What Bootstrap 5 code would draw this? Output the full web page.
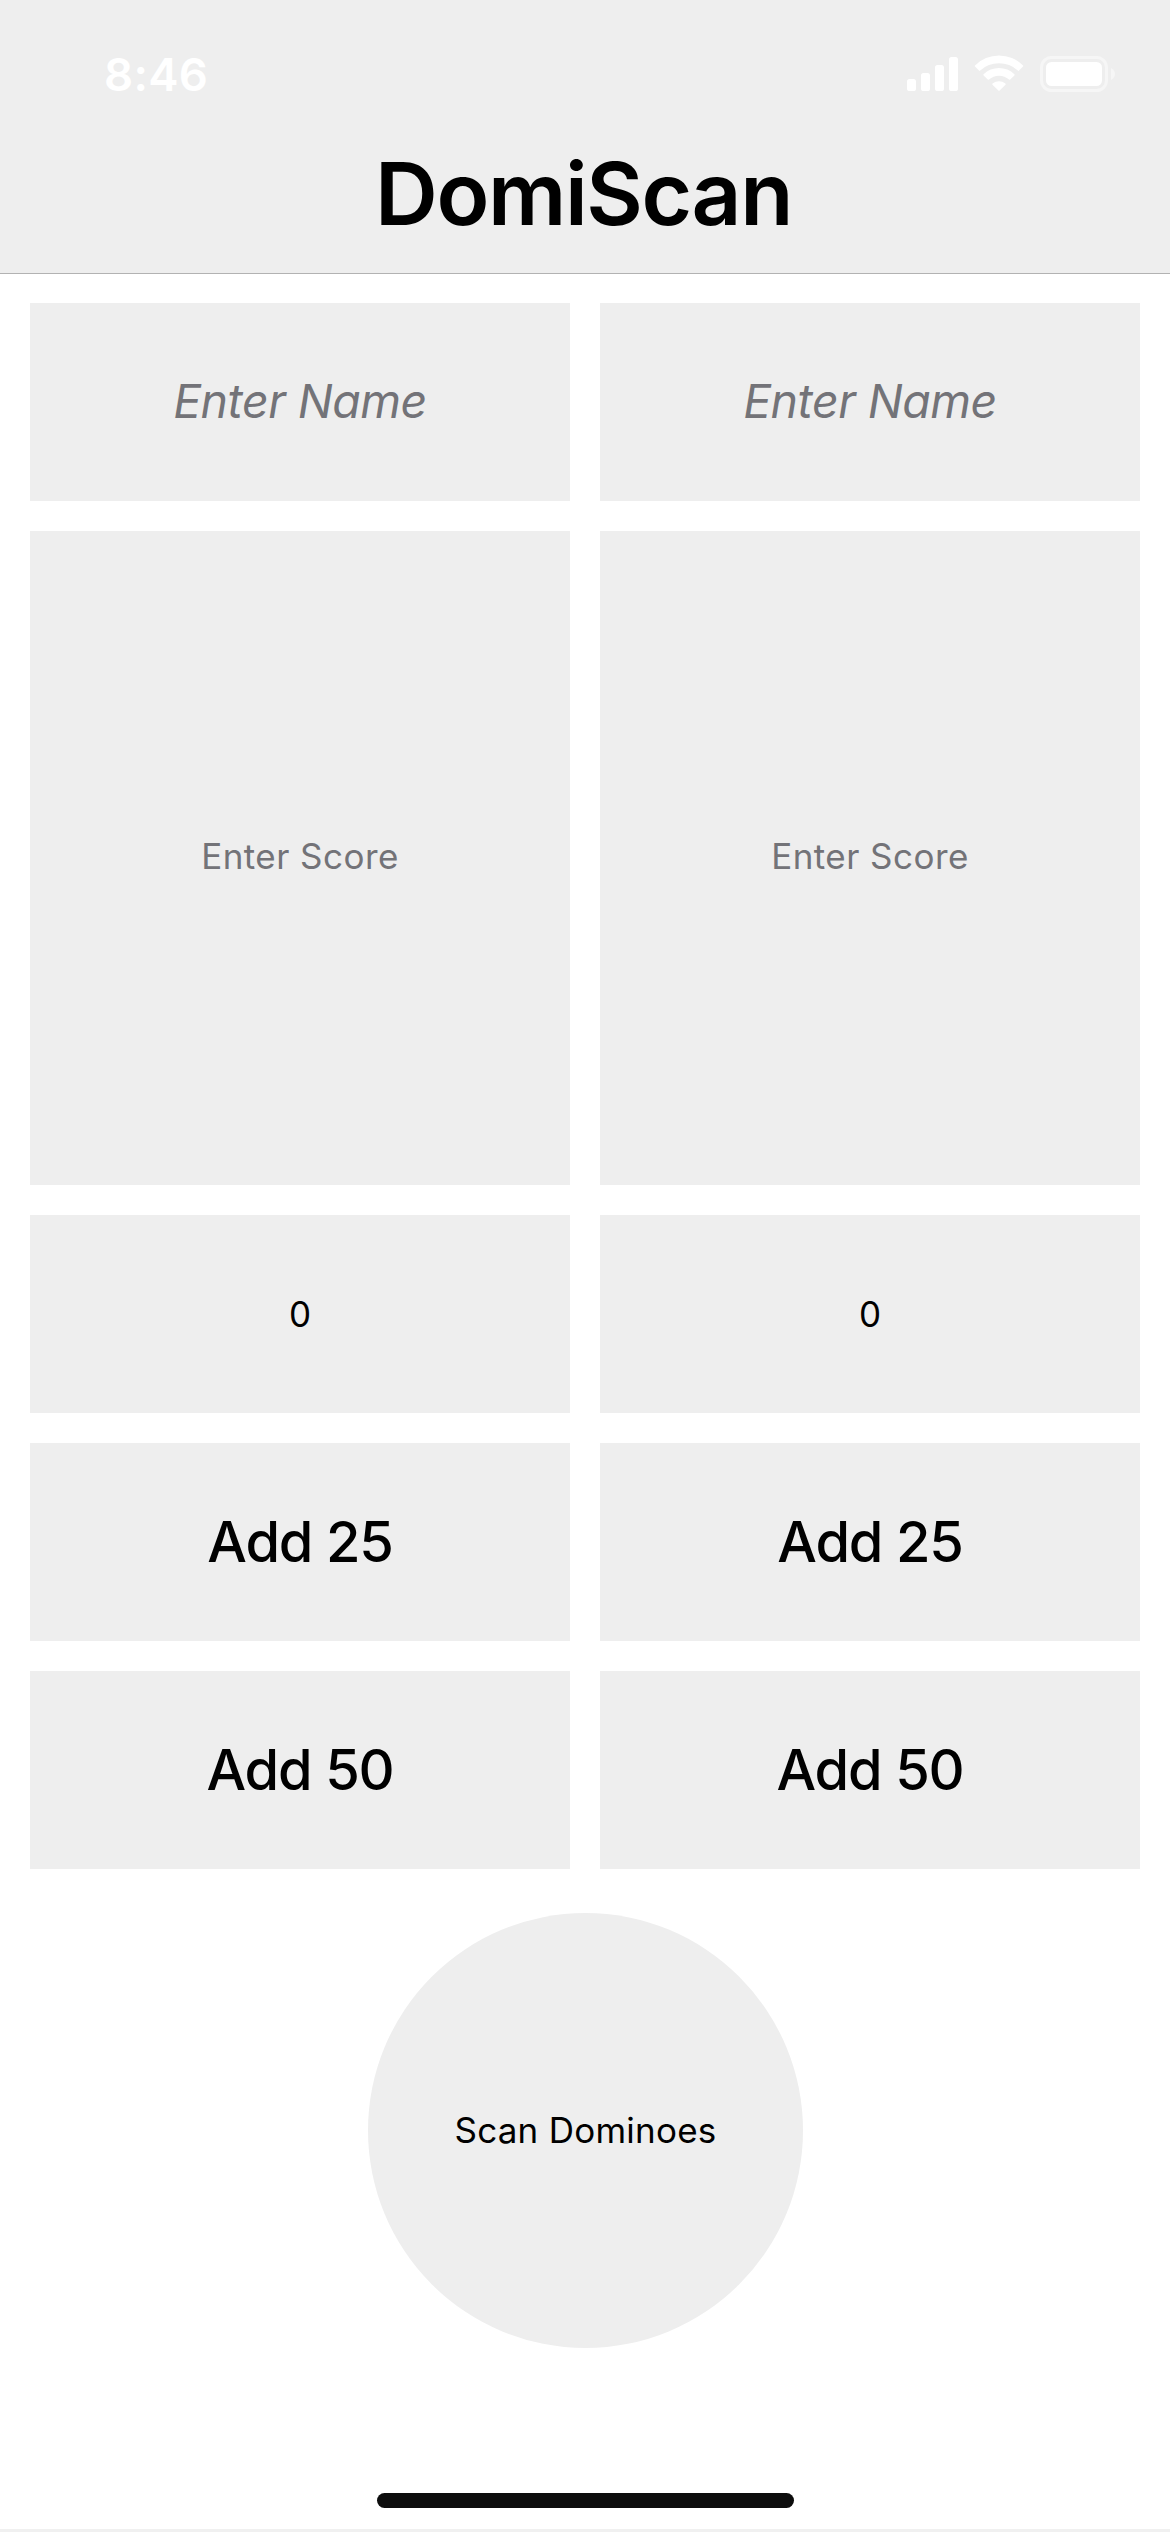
<!DOCTYPE html>
<html lang="en">
<head>
<meta charset="utf-8">
<meta name="viewport" content="width=device-width, initial-scale=1">
<title>DomiScan</title>
<link href="https://cdn.jsdelivr.net/npm/bootstrap@5.3.0/dist/css/bootstrap.min.css" rel="stylesheet">
<style>
  body { font-family: Inter, "Liberation Sans", sans-serif; color: #000; background: #fff; }
  .screen { height: 2532px; overflow: hidden; }
  .app-header { height: 274px; background: #eee; border-bottom: 1px solid #b2b2b2; }
  .status { padding: 47px 55px 0 104px; height: 102px; color: #fff; }
  .clock { font-size: 45.5px; font-weight: 600; line-height: 55px; letter-spacing: .3px; }
  .status-icons { margin-top: 8px; }
  .app-title { margin: 39px 0 0; padding-right: 3px; font-size: 87px; font-weight: 600; line-height: 105px; letter-spacing: -1.4px; }
  .board { padding: 29px 30px 0; gap: 30px; }
  .player { gap: 30px; }
  .tile { height: 198px; background: #eee; font-size: 35px; line-height: 1.2; border: 0; border-radius: 0; color: #000; }
  .tile-name { font-size: 46.5px; font-style: italic; letter-spacing: -.5px; color: #737378; }
  .tile-entry { height: 654px; letter-spacing: .45px; color: #737378; padding-bottom: 4px; }
  .tile-add { padding: 2px 0 0; font-size: 56px; font-weight: 500; letter-spacing: -1.2px; }
  .scan { width: 435px; height: 435px; margin: 44px 0 0 1px; background: #eee; font-size: 35px; letter-spacing: .25px; border: 0; color: #000; }
  .home-bar { width: 417px; height: 15px; margin-bottom: 21px; background: #0d0d0d; }
  .bottom-edge { height: 3px; background: #f0f0f0; }
</style>
</head>
<body>
<div class="screen d-flex flex-column">
  <header class="app-header flex-shrink-0 text-center">
    <div class="status d-flex justify-content-between align-items-start">
      <span class="clock">8:46</span>
      <svg class="status-icons" width="208" height="37" viewBox="907 55 208 37" fill="#fff" aria-hidden="true">
        <rect x="907" y="79" width="9" height="12" rx="2.6"/>
        <rect x="921" y="73" width="9" height="18" rx="2.6"/>
        <rect x="935" y="65" width="9" height="26" rx="2.6"/>
        <rect x="949" y="57" width="9" height="34" rx="2.6"/>
        <path d="M975 65.4A34 34 0 0 1 1023 65.4Q1023.6 66 1023 66.6L1019 70.6Q1018.4 71.2 1017.8 70.6A27.5 27.5 0 0 0 980.2 70.6Q979.6 71.2 979 70.6L975 66.6Q974.4 66 975 65.4Z"/>
        <path d="M983.6 74.2A22 22 0 0 1 1014.4 74.2Q1015 74.8 1014.4 75.4L1010.2 79.4Q1009.6 80 1009 79.5A15 15 0 0 0 989 79.5Q988.4 80 987.8 79.4L983.6 75.4Q983 74.8 983.6 74.2Z"/>
        <path d="M992.6 83.5A10 10 0 0 1 1005.4 83.5Q1006.1 84.1 1005.5 84.7L999.6 90.6Q999 91.2 998.4 90.6L992.5 84.7Q991.9 84.1 992.6 83.5Z"/>
        <rect x="1041.5" y="57.5" width="65" height="33" rx="10" fill="none" stroke="#f6f6f6" stroke-width="3"/>
        <rect x="1046" y="62" width="56" height="24" rx="5.5"/>
        <path d="M1111 68Q1115 70.3 1115 74T1111 80Z" fill="#f6f6f6"/>
      </svg>
    </div>
    <h1 class="app-title">DomiScan</h1>
  </header>

  <main class="d-flex flex-column align-items-center flex-grow-1">
    <div class="board d-flex w-100">
      <section class="player d-flex flex-column flex-fill w-50">
        <div class="tile tile-name d-flex align-items-center justify-content-center">Enter Name</div>
        <div class="tile tile-entry d-flex align-items-center justify-content-center">Enter Score</div>
        <div class="tile d-flex align-items-center justify-content-center">0</div>
        <button type="button" class="btn tile tile-add">Add 25</button>
        <button type="button" class="btn tile tile-add">Add 50</button>
      </section>
      <section class="player d-flex flex-column flex-fill w-50">
        <div class="tile tile-name d-flex align-items-center justify-content-center">Enter Name</div>
        <div class="tile tile-entry d-flex align-items-center justify-content-center">Enter Score</div>
        <div class="tile d-flex align-items-center justify-content-center">0</div>
        <button type="button" class="btn tile tile-add">Add 25</button>
        <button type="button" class="btn tile tile-add">Add 50</button>
      </section>
    </div>
    <button type="button" class="btn scan rounded-circle p-0">Scan Dominoes</button>
  </main>

  <footer class="d-flex flex-column align-items-center flex-shrink-0">
    <div class="home-bar rounded-pill"></div>
    <div class="bottom-edge w-100"></div>
  </footer>
</div>
<script src="https://cdn.jsdelivr.net/npm/bootstrap@5.3.0/dist/js/bootstrap.bundle.min.js"></script>
</body>
</html>
